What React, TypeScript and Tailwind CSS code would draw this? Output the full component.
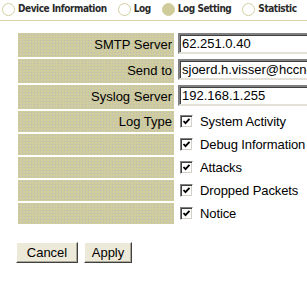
import React from "react";

const labelBg =
  "bg-[#cfcc9f] bg-[radial-gradient(circle,#bdb9bb_0.6px,transparent_0.7px)] bg-[length:3px_3px]";

function Radio({ selected }: { selected?: boolean }) {
  return (
    <span
      className={
        "inline-block w-[13px] h-[13px] rounded-full border border-[#d2ce9f] shrink-0 " +
        (selected ? "bg-[#cfcb9b]" : "bg-white")
      }
    />
  );
}

function Checkbox() {
  return (
    <span className="inline-flex items-center justify-center w-[13px] h-[13px] bg-white border border-t-[#808080] border-l-[#808080] border-b-[#ffffff] border-r-[#ffffff] shadow-[inset_1px_1px_0_#404040,inset_-1px_-1px_0_#d4d0c8] shrink-0">
      <svg width="9" height="9" viewBox="0 0 9 9">
        <path d="M1.5 4 L3.5 6.2 L7.5 1.8" fill="none" stroke="#000" strokeWidth="1.8" />
      </svg>
    </span>
  );
}

function InputRow({ label, value }: { label: string; value: string }) {
  return (
    <div className="flex h-[24px]">
      <div className={"w-[156px] shrink-0 h-full flex items-center justify-end pr-[2px] text-[13px] whitespace-nowrap " + labelBg}>
        {label}
      </div>
      <div className="ml-[4px] shrink-0">
        <div className="w-[220px] h-[21px] flex items-center pl-[2px] bg-white border-2 border-t-[#808080] border-l-[#808080] border-b-[#e4e2d8] border-r-[#e4e2d8] shadow-[inset_1px_1px_0_#404040] text-[13px] whitespace-nowrap overflow-hidden">
          {value}
        </div>
      </div>
    </div>
  );
}

function CheckRow({ label, text }: { label?: string; text: string }) {
  return (
    <div className="flex h-[21px]">
      <div className={"w-[156px] shrink-0 h-full flex items-center justify-end pr-[2px] text-[13px] whitespace-nowrap " + labelBg}>
        {label}
      </div>
      <div className="ml-[6px] shrink-0 flex items-center gap-[7px] text-[13px] whitespace-nowrap">
        <Checkbox />
        <span className="tracking-[-0.1px]">{text}</span>
      </div>
    </div>
  );
}

export default function App() {
  const nav = [
    { t: "Device Information" },
    { t: "Log" },
    { t: "Log Setting", s: true },
    { t: "Statistic" },
  ];
  return (
    <div className="w-[307px] h-[281px] bg-white overflow-hidden text-black font-['Liberation_Sans',Arial,sans-serif]">
      <div className="h-[21px] border-b border-[#d8d4a8] flex items-start pt-[2px] pl-[2px] gap-[11px] font-['DejaVu_Sans_Condensed','DejaVu_Sans',sans-serif] font-bold text-[10px] tracking-[-0.45px] text-[#2a2a2a] whitespace-nowrap">
        {nav.map((n) => (
          <div key={n.t} className="flex items-center gap-[3px] h-[14px] shrink-0">
            <Radio selected={n.s} />
            <span className="leading-none">{n.t}</span>
          </div>
        ))}
      </div>
      <div className="ml-[18px] mt-[12px] flex flex-col gap-[2px]">
        <InputRow label="SMTP Server" value="62.251.0.40" />
        <InputRow label="Send to" value="sjoerd.h.visser@hccnet.nl" />
        <InputRow label="Syslog Server" value="192.168.1.255" />
        <CheckRow label="Log Type" text="System Activity" />
        <CheckRow text="Debug Information" />
        <CheckRow text="Attacks" />
        <CheckRow text="Dropped Packets" />
        <CheckRow text="Notice" />
      </div>
      <div className="ml-[16px] mt-[18px] flex gap-[6px]">
        <button className="w-[62px] h-[21px] bg-[#ece9d8] border border-t-white border-l-white border-b-[#404040] border-r-[#404040] shadow-[inset_-1px_-1px_0_#aca899] text-[13px] leading-none">
          Cancel
        </button>
        <button className="w-[48px] h-[21px] bg-[#ece9d8] border border-t-white border-l-white border-b-[#404040] border-r-[#404040] shadow-[inset_-1px_-1px_0_#aca899] text-[13px] leading-none">
          Apply
        </button>
      </div>
    </div>
  );
}
